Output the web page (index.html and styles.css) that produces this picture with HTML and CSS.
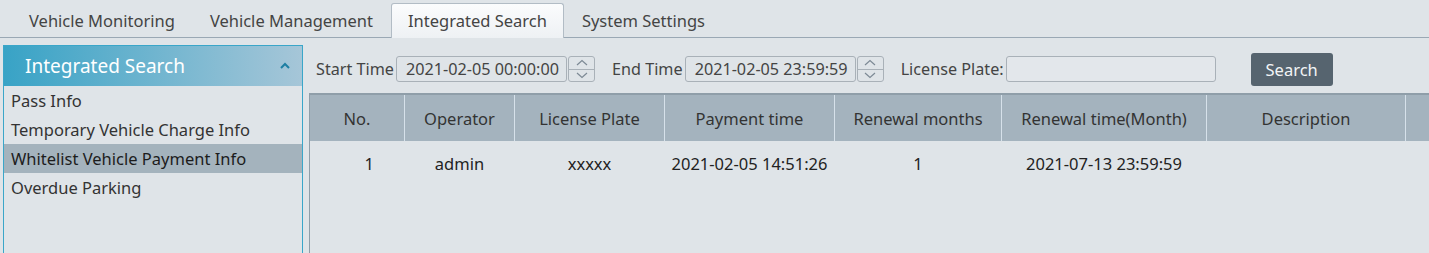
FILE: index.html
```html
<!DOCTYPE html>
<html lang="en">
<head>
    <meta charset="UTF-8">
    <title>Integrated Search</title>
    <link rel="stylesheet" href="styles.css">
</head>
<body>
    <div class="tabs">
        <div class="tab">Vehicle Monitoring</div>
        <div class="tab">Vehicle Management</div>
        <div class="tab active">Integrated Search</div>
        <div class="tab">System Settings</div>
    </div>

    <div class="main">
        <div class="sidebar">
            <div class="side-head">
                <span>Integrated Search</span>
                <svg class="caret" width="12" height="8" viewBox="0 0 12 8"><polyline points="2,6 6,2 10,6" fill="none" stroke="#1d7fa3" stroke-width="2"/></svg>
            </div>
            <div class="side-item">Pass Info</div>
            <div class="side-item">Temporary Vehicle Charge Info</div>
            <div class="side-item selected">Whitelist Vehicle Payment Info</div>
            <div class="side-item">Overdue Parking</div>
        </div>

        <div class="content">
            <div class="toolbar">
                <label>Start Time</label>
                <div class="datebox">
                    <div class="dateval">2021-02-05 00:00:00</div>
                    <div class="spin">
                        <span><svg width="12" height="7" viewBox="0 0 12 7"><polyline points="1,6 6,1.5 11,6" fill="none" stroke="#7d8a95" stroke-width="1.2"/></svg></span>
                        <span><svg width="12" height="7" viewBox="0 0 12 7"><polyline points="1,1 6,5.5 11,1" fill="none" stroke="#7d8a95" stroke-width="1.2"/></svg></span>
                    </div>
                </div>
                <label class="gap">End Time</label>
                <div class="datebox">
                    <div class="dateval">2021-02-05 23:59:59</div>
                    <div class="spin">
                        <span><svg width="12" height="7" viewBox="0 0 12 7"><polyline points="1,6 6,1.5 11,6" fill="none" stroke="#7d8a95" stroke-width="1.2"/></svg></span>
                        <span><svg width="12" height="7" viewBox="0 0 12 7"><polyline points="1,1 6,5.5 11,1" fill="none" stroke="#7d8a95" stroke-width="1.2"/></svg></span>
                    </div>
                </div>
                <label class="gap">License Plate:</label>
                <input class="plate" type="text">
                <button class="search-btn" type="button">Search</button>
            </div>

            <div class="grid-wrap">
                <table class="grid">
                    <thead>
                        <tr>
                            <th class="c1">No.</th>
                            <th class="c2">Operator</th>
                            <th class="c3">License Plate</th>
                            <th class="c4">Payment time</th>
                            <th class="c5">Renewal months</th>
                            <th class="c6">Renewal time(Month)</th>
                            <th class="c7">Description</th>
                            <th></th>
                        </tr>
                    </thead>
                    <tbody>
                        <tr>
                            <td class="num">1</td>
                            <td>admin</td>
                            <td>xxxxx</td>
                            <td>2021-02-05 14:51:26</td>
                            <td>1</td>
                            <td>2021-07-13 23:59:59</td>
                            <td></td>
                            <td></td>
                        </tr>
                    </tbody>
                </table>
            </div>
        </div>
    </div>
</body>
</html>
```

FILE: styles.css
```css
body {
    margin: 0;
    background: #dfe4e8;
    font-family: "Noto Sans", "Open Sans", sans-serif;
    font-size: 16.5px;
    color: #333;
    overflow: hidden;
}

.tabs {
    display: flex;
    align-items: flex-end;
    gap: 1px;
    height: 37px;
    padding-left: 12px;
    border-bottom: 1px solid #9aa8b4;
}
.tab {
    height: 33px;
    line-height: 33px;
    padding: 0 16px;
    color: #444;
    border: 1px solid transparent;
    border-bottom: none;
}
.tab.active {
    background: linear-gradient(#fbfcfd, #eef1f4);
    border-color: #b2bcc5;
    border-radius: 3px 3px 0 0;
    margin-bottom: -1px;
    height: 34px;
}

.main {
    display: flex;
    margin-top: 7px;
    height: 220px;
}

.sidebar {
    flex-shrink: 0;
    width: 298px;
    margin-left: 3px;
    border: 1px solid #3aa6c9;
    border-bottom: none;
}
.side-head {
    display: flex;
    align-items: center;
    justify-content: space-between;
    height: 40px;
    padding: 0 11px 0 21px;
    background: linear-gradient(to right, #38a3c6, #a6c6d8);
    color: #fff;
    font-size: 19px;
}
.side-item {
    height: 29px;
    line-height: 29px;
    padding-left: 7px;
    color: #333;
}
.side-item.selected {
    background: #a4b3bd;
    color: #1c1c1c;
}

.content {
    flex: 1;
    min-width: 0;
    margin-left: 6px;
    display: flex;
    flex-direction: column;
}

.toolbar {
    display: flex;
    align-items: center;
    height: 48px;
    padding-left: 7px;
    flex-shrink: 0;
    font-size: 16.2px;
}
.toolbar label {
    color: #444;
    margin-right: 2px;
}
.toolbar label.gap {
    margin-left: 17px;
}
.datebox {
    display: flex;
    height: 26px;
}
.dateval {
    width: 160px;
    padding-left: 9px;
    line-height: 24px;
    border: 1px solid #a9b1b8;
    border-radius: 3px;
    color: #444;
}
.spin {
    display: flex;
    flex-direction: column;
    width: 25px;
    margin-left: 1px;
    border: 1px solid #a9b1b8;
    border-radius: 3px;
}
.spin span {
    flex: 1;
    display: flex;
    align-items: center;
    justify-content: center;
}
.spin span + span {
    border-top: 1px solid #a9b1b8;
}
.plate {
    width: 206px;
    height: 22px;
    border: 1px solid #a9b1b8;
    border-radius: 3px;
    background: #e3e7eb;
    padding: 1px;
}
.search-btn {
    margin-left: 35px;
    width: 82px;
    height: 33px;
    background: #56646f;
    color: #f2f4f6;
    border: none;
    border-radius: 3px;
    font-family: inherit;
    font-size: 16.5px;
}

.grid-wrap {
    flex: 1;
    border-left: 1px solid #8f9ea9;
    border-top: 2px solid #8f9ea9;
}
.grid {
    border-collapse: collapse;
    width: 1140px;
}
.grid th {
    height: 46px;
    background: #a4b3be;
    font-weight: normal;
    color: #333;
    border-right: 1px solid #d6e1ea;
    padding: 0;
}
.grid td {
    height: 45px;
    text-align: center;
    color: #222;
    padding: 0;
}
.grid td.num {
    padding-left: 24px;
}
.c1 { width: 94px; }
.c2 { width: 109px; }
.c3 { width: 149px; }
.c4 { width: 169px; }
.c5 { width: 166px; }
.c6 { width: 204px; }
.c7 { width: 198px; }
```
